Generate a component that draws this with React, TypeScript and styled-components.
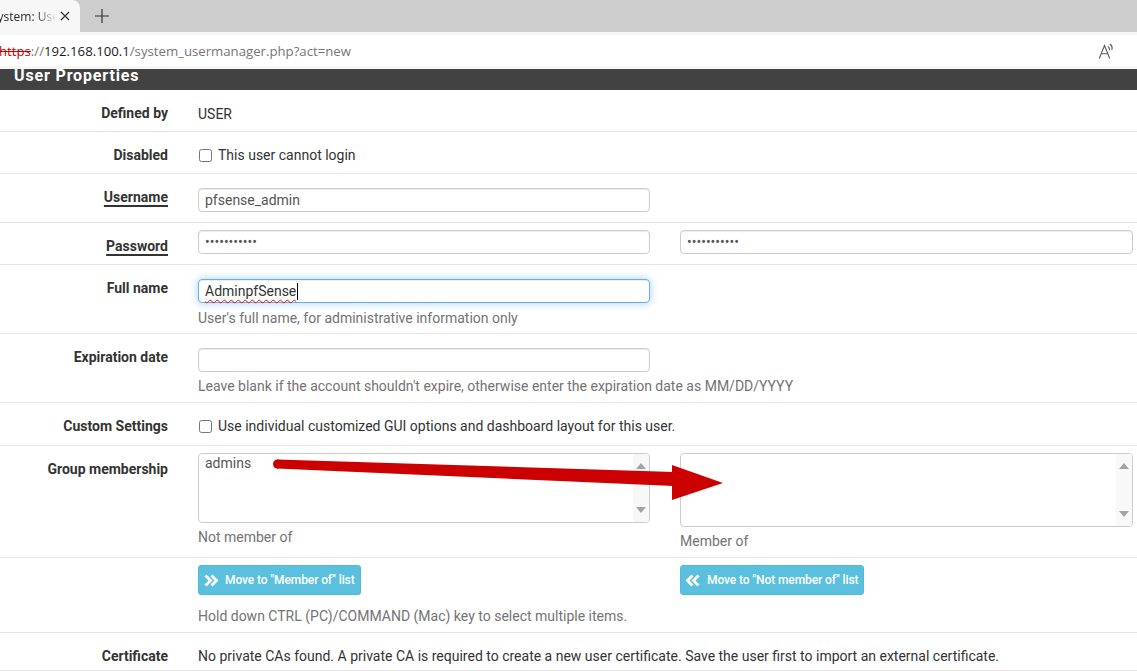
import React from "react";
import styled, { createGlobalStyle } from "styled-components";

const GlobalStyle = createGlobalStyle`
  html, body { margin: 0; padding: 0; background: #fff; }
  body {
    width: 1137px;
    height: 671px;
    overflow: hidden;
    font-family: Roboto, "Liberation Sans", Arial, sans-serif;
  }
  * { box-sizing: border-box; }
`;

const Page = styled.div`
  position: relative;
  width: 1137px;
  height: 671px;
  overflow: hidden;
  display: flex;
  flex-direction: column;
`;

/* ---------- browser chrome ---------- */
const TabStrip = styled.div`
  height: 32px;
  flex-shrink: 0;
  background: #cdcdcd;
  display: flex;
  align-items: stretch;
`;

const Tab = styled.div`
  width: 80px;
  background: #f7f7f7;
  border-top-right-radius: 8px;
  display: flex;
  align-items: center;
  padding-right: 10px;
`;

const TabTitle = styled.span`
  flex: 1;
  margin-left: -9px;
  overflow: hidden;
  white-space: nowrap;
  font: 12px "Open Sans", "Noto Sans", sans-serif;
  color: #2b2b2b;
  -webkit-mask-image: linear-gradient(to right, #000 70%, transparent 100%);
  mask-image: linear-gradient(to right, #000 70%, transparent 100%);
`;

const TabClose = styled.span`
  display: flex;
  margin-left: 4px;
`;

const NewTab = styled.span`
  display: flex;
  align-items: center;
  margin-left: 15px;
`;

const Toolbar = styled.div`
  height: 37px;
  flex-shrink: 0;
  background: #f7f7f7;
  padding: 3px 0;
`;

const AddressField = styled.div`
  height: 31px;
  background: #fff;
  display: flex;
  align-items: center;
  justify-content: space-between;
  padding-right: 22px;
`;

const Url = styled.span`
  margin-left: -1px;
  font: 13.2px "Open Sans", "Noto Sans", sans-serif;
  color: #767676;
  white-space: nowrap;
`;

const UrlScheme = styled.span`
  color: #c80000;
  text-decoration: line-through;
`;

const UrlHost = styled.span`
  color: #1a1a1a;
`;

/* ---------- panel ---------- */
const PanelHeading = styled.div`
  height: 21px;
  flex-shrink: 0;
  background: #424242;
  color: #fff;
  font-weight: 700;
  font-size: 16px;
  line-height: 14px;
  padding-left: 14px;
  letter-spacing: 0.85px;
  white-space: nowrap;
`;

const Row = styled.div<{ $h?: number }>`
  display: grid;
  grid-template-columns: 168px 452px 453px;
  column-gap: 30px;
  align-items: start;
  flex-shrink: 0;
  ${(p) => (p.$h ? `height: ${p.$h}px;` : `flex: 1;`)}
  border-bottom: 1px solid #e4e4e4;
`;

const Label = styled.div`
  padding-top: 13px;
  text-align: right;
  font-weight: 700;
  font-size: 14px;
  line-height: 20px;
  color: #333;
  white-space: nowrap;
`;

const Required = styled.span`
  text-decoration: underline;
  text-decoration-thickness: 2px;
  text-underline-offset: 3px;
`;

const Cell = styled.div<{ $pt?: number }>`
  padding-top: ${(p) => p.$pt ?? 0}px;
  font-size: 14px;
  line-height: 20px;
  color: #333;
  white-space: nowrap;
  min-width: 0;
`;

const CheckLabel = styled.label`
  display: flex;
  align-items: center;
  color: #333;
`;

const Check = styled.input`
  width: 13px;
  height: 13px;
  margin: 0 6px 0 1px;
`;

const TextInput = styled.input`
  display: block;
  width: 100%;
  height: 24px;
  padding: 0 6px;
  border: 1px solid #ccc;
  border-radius: 4px;
  background: #fff;
  font: 14px Roboto, "Liberation Sans", sans-serif;
  color: #555;
  outline: none;
  box-shadow: inset 0 1px 1px rgba(0, 0, 0, 0.075);
`;

const FocusedField = styled.div`
  display: flex;
  align-items: center;
  width: 100%;
  height: 24px;
  padding: 0 6px;
  border: 1px solid #66afe9;
  border-radius: 4px;
  background: #fff;
  font: 14px Roboto, "Liberation Sans", sans-serif;
  color: #333;
  outline: none;
  box-shadow: inset 0 1px 1px rgba(0, 0, 0, 0.075), 0 0 8px rgba(102, 175, 233, 0.6);
`;

const Misspelled = styled.span`
  text-decoration: underline wavy #e01010;
  text-decoration-skip-ink: none;
  text-decoration-thickness: 1px;
  text-underline-offset: 3px;
`;

const Caret = styled.span`
  display: inline-block;
  width: 1px;
  height: 17px;
  background: #000;
  margin-left: 1px;
`;

const Help = styled.div<{ $mt: number }>`
  margin-top: ${(p) => p.$mt}px;
  color: #737373;
  font-size: 14px;
  line-height: 20px;
  white-space: nowrap;
`;

const ListBox = styled.div<{ $h: number }>`
  display: flex;
  height: ${(p) => p.$h}px;
  border: 1px solid #ccc;
  border-radius: 4px;
  overflow: hidden;
  background: #fff;
`;

const Options = styled.div`
  flex: 1;
  padding: 0 6px;
  font-size: 14px;
  line-height: 18px;
  color: #555;
`;

const ScrollTrack = styled.div<{ $bottom: number }>`
  width: 16px;
  background: #f8f8f8;
  display: flex;
  flex-direction: column;
  align-items: center;
  justify-content: space-between;
  padding: 9px 0 ${(p) => p.$bottom}px;
`;

const ArrowUp = styled.span`
  width: 0;
  height: 0;
  border-left: 5px solid transparent;
  border-right: 5px solid transparent;
  border-bottom: 6px solid #a3a3a3;
`;

const ArrowDown = styled.span`
  width: 0;
  height: 0;
  border-left: 5px solid transparent;
  border-right: 5px solid transparent;
  border-top: 6px solid #a3a3a3;
`;

const InfoButton = styled.button`
  display: inline-flex;
  align-items: center;
  gap: 7px;
  height: 30px;
  padding: 0 5px;
  background: #5bc0de;
  border: 1px solid #4fbad9;
  border-radius: 3px;
  color: #fff;
  font: 500 12px Roboto, "Liberation Sans", sans-serif;
  letter-spacing: -0.1px;
  cursor: pointer;
`;

const Overlay = styled.svg`
  position: absolute;
  left: 0;
  top: 0;
  pointer-events: none;
`;

function ReadAloudIcon() {
  return (
    <svg width="17" height="16" viewBox="0 0 17 16" fill="none" stroke="#5a5a5a" strokeWidth="1.1" strokeLinecap="round">
      <path d="M1.5 15 L6.5 2.5 L11.5 15" />
      <path d="M3.3 10.7 H9.7" />
      <path d="M10.2 3.6 Q11.6 4.6 11.4 6.8" />
      <path d="M12.2 1.3 Q14.6 3 14 6.4" />
    </svg>
  );
}

function DoubleAngle({ dir }: { dir: "left" | "right" }) {
  const d =
    dir === "right"
      ? "M1.5 1.5 L6.5 6.5 L1.5 11.5 M7.5 1.5 L12.5 6.5 L7.5 11.5"
      : "M6.5 1.5 L1.5 6.5 L6.5 11.5 M12.5 1.5 L7.5 6.5 L12.5 11.5";
  return (
    <svg width="14" height="13" viewBox="0 0 14 13" fill="none" stroke="#fff" strokeWidth="2.8" strokeLinejoin="miter">
      <path d={d} />
    </svg>
  );
}

function RedArrow() {
  return (
    <Overlay width="1137" height="671" viewBox="0 0 1137 671">
      <circle cx="277.5" cy="464" r="4.5" fill="#cc0000" />
      <polygon points="277,459.5 674,472 674,486 277,468.5" fill="#cc0000" />
      <polygon points="672,465 723,483 672,500" fill="#cc0000" />
    </Overlay>
  );
}

export default function App() {
  return (
    <Page>
      <GlobalStyle />
      <TabStrip>
        <Tab>
          <TabTitle>System: User Manager</TabTitle>
          <TabClose>
            <svg width="10" height="10" viewBox="0 0 10 10" stroke="#333" strokeWidth="1.2">
              <path d="M1 1 L9 9 M9 1 L1 9" />
            </svg>
          </TabClose>
        </Tab>
        <NewTab>
          <svg width="14" height="14" viewBox="0 0 14 14" stroke="#333" strokeWidth="1.2">
            <path d="M7 0 V14 M0 7 H14" />
          </svg>
        </NewTab>
      </TabStrip>

      <Toolbar>
        <AddressField>
          <Url>
            <UrlScheme>https</UrlScheme>://<UrlHost>192.168.100.1</UrlHost>/system_usermanager.php?act=new
          </Url>
          <ReadAloudIcon />
        </AddressField>
      </Toolbar>

      <PanelHeading>User Properties</PanelHeading>

      <Row $h={42}>
        <Label>Defined by</Label>
        <Cell $pt={14}>USER</Cell>
      </Row>

      <Row $h={42}>
        <Label>Disabled</Label>
        <Cell $pt={13}>
          <CheckLabel>
            <Check type="checkbox" />
            This user cannot login
          </CheckLabel>
        </Cell>
      </Row>

      <Row $h={49}>
        <Label>
          <Required>Username</Required>
        </Label>
        <Cell $pt={14}>
          <TextInput defaultValue="pfsense_admin" />
        </Cell>
      </Row>

      <Row $h={42}>
        <Label>
          <Required>Password</Required>
        </Label>
        <Cell $pt={7}>
          <TextInput type="password" defaultValue="pfsenseadmn" />
        </Cell>
        <Cell $pt={7}>
          <TextInput type="password" defaultValue="pfsenseadmn" />
        </Cell>
      </Row>

      <Row $h={69}>
        <Label>Full name</Label>
        <Cell $pt={14}>
          <FocusedField role="textbox">
            <Misspelled>AdminpfSense</Misspelled>
            <Caret />
          </FocusedField>
          <Help $mt={5}>User's full name, for administrative information only</Help>
        </Cell>
      </Row>

      <Row $h={69}>
        <Label>Expiration date</Label>
        <Cell $pt={14}>
          <TextInput defaultValue="" />
          <Help $mt={4}>
            Leave blank if the account shouldn't expire, otherwise enter the expiration date as MM/DD/YYYY
          </Help>
        </Cell>
      </Row>

      <Row $h={43}>
        <Label>Custom Settings</Label>
        <Cell $pt={13}>
          <CheckLabel>
            <Check type="checkbox" />
            Use individual customized GUI options and dashboard layout for this user.
          </CheckLabel>
        </Cell>
      </Row>

      <Row $h={112}>
        <Label>Group membership</Label>
        <Cell $pt={7}>
          <ListBox $h={70}>
            <Options>admins</Options>
            <ScrollTrack $bottom={9}>
              <ArrowUp />
              <ArrowDown />
            </ScrollTrack>
          </ListBox>
          <Help $mt={4}>Not member of</Help>
        </Cell>
        <Cell $pt={7}>
          <ListBox $h={74}>
            <Options />
            <ScrollTrack $bottom={9}>
              <ArrowUp />
              <ArrowDown />
            </ScrollTrack>
          </ListBox>
          <Help $mt={4}>Member of</Help>
        </Cell>
      </Row>

      <Row $h={75}>
        <Label />
        <Cell $pt={7}>
          <InfoButton type="button">
            <DoubleAngle dir="right" />
            Move to "Member of" list
          </InfoButton>
          <Help $mt={11}>Hold down CTRL (PC)/COMMAND (Mac) key to select multiple items.</Help>
        </Cell>
        <Cell $pt={7}>
          <InfoButton type="button">
            <DoubleAngle dir="left" />
            Move to "Not member of" list
          </InfoButton>
        </Cell>
      </Row>

      <Row>
        <Label>Certificate</Label>
        <Cell $pt={13}>
          No private CAs found. A private CA is required to create a new user certificate. Save the user first to import an external certificate.
        </Cell>
      </Row>

      <RedArrow />
    </Page>
  );
}
